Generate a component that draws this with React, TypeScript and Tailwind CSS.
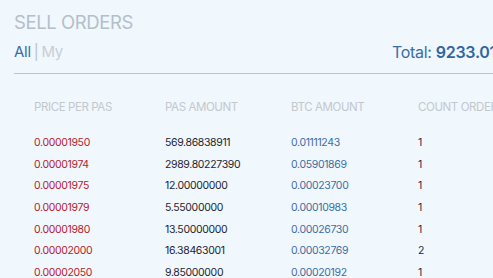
import React from 'react'

const rows = [
  { price: '0.00001950', amount: '569.86838911', btc: '0.01111243', count: '1' },
  { price: '0.00001974', amount: '2989.80227390', btc: '0.05901869', count: '1' },
  { price: '0.00001975', amount: '12.00000000', btc: '0.00023700', count: '1' },
  { price: '0.00001979', amount: '5.55000000', btc: '0.00010983', count: '1' },
  { price: '0.00001980', amount: '13.50000000', btc: '0.00026730', count: '1' },
  { price: '0.00002000', amount: '16.38463001', btc: '0.00032769', count: '2' },
  { price: '0.00002050', amount: '9.85000000', btc: '0.00020192', count: '1' },
]

const cols = 'grid grid-cols-[131px_126px_127px_140px]'

function App() {
  return (
    <div
      className="h-[278px] w-[493px] overflow-hidden bg-[#f0f7fd]"
      style={{ fontFamily: 'Inter, "Noto Sans", sans-serif' }}
    >
      <div className="w-[620px] pl-[14px] pt-[10px]">
        <h2 className="text-[18.5px] leading-[24px] tracking-[-0.4px] text-[#b4bfca]">SELL ORDERS</h2>
        <div className="mt-[9px] flex items-end justify-between border-b border-[#b9c5d2] pb-[12px] pr-[10px]">
          <div className="text-[15px] leading-[18px] tracking-[-0.3px]">
            <span className="text-[#3a6ea5]">All</span>
            <span className="mx-[3px] text-[#b8c2cc]">|</span>
            <span className="text-[#c7ced6]">My</span>
          </div>
          <div className="w-[218px] text-[16px] leading-[18px] tracking-[-0.3px] text-[#3a6ea5]">
            Total: <span className="font-semibold text-[#2f66a3]">9233.0123</span>
          </div>
        </div>
        <div className="pl-[20px] pt-[26px]">
          <div className={`${cols} text-[11.5px] leading-[14px] tracking-[-0.4px] text-[#c3c8cd]`}>
            <div>PRICE PER PAS</div>
            <div>PAS AMOUNT</div>
            <div>BTC AMOUNT</div>
            <div>COUNT ORDERS</div>
          </div>
          <div className="pt-[18px]">
            {rows.map((r) => (
              <div key={r.price} className={`${cols} h-[21.7px] text-[10.5px] leading-[21.7px] tracking-[-0.35px]`}>
                <div className="text-[#b5222e]">{r.price}</div>
                <div className="text-[#1e2630]">{r.amount}</div>
                <div className="text-[#3d6ea3]">{r.btc}</div>
                <div className="text-[#2a2f36]">{r.count}</div>
              </div>
            ))}
          </div>
        </div>
      </div>
    </div>
  )
}

export default App
